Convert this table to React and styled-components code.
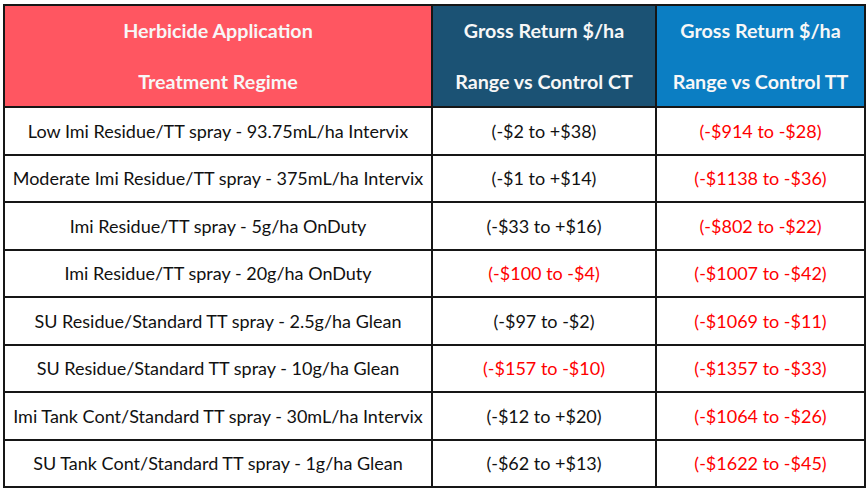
import React from 'react';
import styled, { createGlobalStyle } from 'styled-components';

const rows = [
  ['Low Imi Residue/TT spray - 93.75mL/ha Intervix', '(-$2 to +$38)', false, '(-$914 to -$28)'],
  ['Moderate Imi Residue/TT spray - 375mL/ha Intervix', '(-$1 to +$14)', false, '(-$1138 to -$36)'],
  ['Imi Residue/TT spray - 5g/ha OnDuty', '(-$33 to +$16)', false, '(-$802 to -$22)'],
  ['Imi Residue/TT spray - 20g/ha OnDuty', '(-$100 to -$4)', true, '(-$1007 to -$42)'],
  ['SU Residue/Standard TT spray - 2.5g/ha Glean', '(-$97 to -$2)', false, '(-$1069 to -$11)'],
  ['SU Residue/Standard TT spray - 10g/ha Glean', '(-$157 to -$10)', true, '(-$1357 to -$33)'],
  ['Imi Tank Cont/Standard TT spray - 30mL/ha Intervix', '(-$12 to +$20)', false, '(-$1064 to -$26)'],
  ['SU Tank Cont/Standard TT spray - 1g/ha Glean', '(-$62 to +$13)', false, '(-$1622 to -$45)'],
];

const GlobalStyle = createGlobalStyle`
  body {
    margin: 0;
    background: #ffffff;
    font-family: Lato, "Open Sans", sans-serif;
  }
`;

const Page = styled.div`
  padding: 4px 0 0 3px;
`;

const Table = styled.div`
  display: grid;
  grid-template-columns: 426px 222px 207px;
  grid-template-rows: 100px repeat(8, 45.5px);
  gap: 2px;
  padding: 2px;
  width: max-content;
  background: #161616;
`;

const HeadCell = styled.div`
  display: flex;
  flex-direction: column;
  align-items: center;
  justify-content: center;
  background: ${(p) => p.$bg};
  color: #f7f7f7;
  font-weight: 700;
  font-size: 19.7px;
  line-height: 51px;
  white-space: nowrap;
`;

const Cell = styled.div`
  display: flex;
  align-items: center;
  justify-content: center;
  background: #ffffff;
  color: ${(p) => (p.$neg ? '#ff0000' : '#111111')};
  font-size: 18px;
  white-space: nowrap;
`;

export default function App() {
  return (
    <Page>
      <GlobalStyle />
      <Table>
        <HeadCell $bg="#ff5661">
          <span>Herbicide Application</span>
          <span>Treatment Regime</span>
        </HeadCell>
        <HeadCell $bg="#1b5274">
          <span>Gross Return $/ha</span>
          <span>Range vs Control CT</span>
        </HeadCell>
        <HeadCell $bg="#0b7ec3">
          <span>Gross Return $/ha</span>
          <span>Range vs Control TT</span>
        </HeadCell>
        {rows.map(([name, ct, ctNeg, tt]) => (
          <React.Fragment key={name}>
            <Cell>{name}</Cell>
            <Cell $neg={ctNeg}>{ct}</Cell>
            <Cell $neg>{tt}</Cell>
          </React.Fragment>
        ))}
      </Table>
    </Page>
  );
}
